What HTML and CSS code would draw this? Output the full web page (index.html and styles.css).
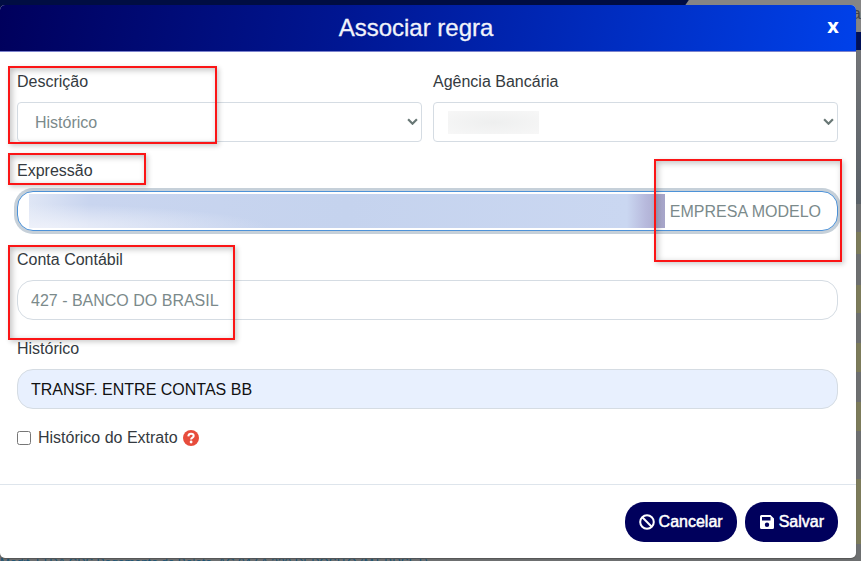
FILE: index.html
```html
<!DOCTYPE html>
<html lang="pt-BR">
<head>
<meta charset="utf-8">
<meta name="viewport" content="width=device-width, initial-scale=1">
<title>Associar regra</title>
<link rel="stylesheet" href="styles.css">
</head>
<body>
<div class="backdrop" aria-hidden="true">
  <div class="backdrop-banner"></div>
  <div class="backdrop-top"><span>a</span></div>
  <div class="backdrop-nav"></div>
  <div class="backdrop-head"></div>
  <div class="backdrop-rows"></div>
</div>
<form class="modal" role="dialog" aria-labelledby="title">
  <header class="modal-header">
    <h1 id="title">Associar regra</h1>
    <button class="close" type="button" aria-label="Fechar">x</button>
  </header>
  <div class="modal-body">
    <div class="row">
      <div class="field">
        <label for="descricao">Descrição</label>
        <div class="select-wrap">
          <select id="descricao" class="control"><option>Histórico</option></select>
          <svg class="chevron" viewBox="0 0 10 6"><path d="M1 1l4 4 4-4"/></svg>
        </div>
        <span class="mark mark-descricao"></span>
      </div>
      <div class="field">
        <label for="agencia">Agência Bancária</label>
        <div class="select-wrap">
          <select id="agencia" class="control"><option></option></select>
          <span class="redacted-agency"></span>
          <svg class="chevron" viewBox="0 0 10 6"><path d="M1 1l4 4 4-4"/></svg>
        </div>
      </div>
    </div>
    <div class="field">
      <label for="expressao">Expressão</label>
      <div class="input-wrap">
        <input id="expressao" class="control pill focused" type="text" value="EMPRESA MODELO">
        <span class="redacted-text"></span>
      </div>
      <span class="mark mark-label"></span>
      <span class="mark mark-value"></span>
    </div>
    <div class="field">
      <label for="conta">Conta Contábil</label>
      <input id="conta" class="control pill" type="text" value="427 - BANCO DO BRASIL">
      <span class="mark mark-conta"></span>
    </div>
    <div class="field">
      <label for="historico">Histórico</label>
      <input id="historico" class="control pill filled" type="text" value="TRANSF. ENTRE CONTAS BB">
    </div>
    <div class="check">
      <input id="extrato" type="checkbox">
      <label for="extrato">Histórico do Extrato</label>
      <svg class="help" viewBox="0 0 16 16"><circle cx="8" cy="8" r="8"/><path d="M5.300 6.300C5.500 4.600 6.500 3.800 8 3.800c1.600 0 2.700.9 2.700 2.200C10.700 7.700 8.100 7.500 8.100 9.500"/><circle class="dot" cx="8.100" cy="12" r="1.400"/></svg>
    </div>
  </div>
  <footer class="modal-footer">
    <button class="btn" type="button">
      <svg viewBox="0 0 16 16"><g fill="none" stroke="currentColor" stroke-width="2"><circle cx="8" cy="8" r="6.800"/><path d="M3.300 3.300l9.400 9.400"/></g></svg>
      <span>Cancelar</span>
    </button>
    <button class="btn" type="submit">
      <svg viewBox="0 0 16 16"><path fill="currentColor" fill-rule="evenodd" d="M2.500 1H11.500L15 4.500V13.500Q15 15 13.500 15H2.500Q1 15 1 13.500V2.500Q1 1 2.500 1ZM3 3V6.500H11.500V3ZM8 8.500A2.200 2.200 0 1 0 8 12.900A2.200 2.200 0 1 0 8 8.500Z"/></svg>
      <span>Salvar</span>
    </button>
  </footer>
</form>
<div class="page-line" aria-hidden="true">Modif. LTDA CPS Pagamento de Boleto, AC 047 A 330 DEPÓSITO (MT BRSET)</div>
</body>
</html>
```

FILE: styles.css
```css
* { box-sizing: border-box; }
html { height: 100%; }
body {
  margin: 0;
  height: 100%;
  padding: 5px 5px 0 0;
  overflow: hidden;
  position: relative;
  background: #777977;
  color: #343a40;
  font: 16px/24px "Liberation Sans", Arial, sans-serif;
}
button, input, select { font: inherit; }

.backdrop {
  position: absolute;
  inset: 0;
  display: flex;
  flex-direction: column;
  background: #777;
  z-index: -1;
}
.backdrop-banner {
  position: absolute;
  inset: 0 20% auto 0;
  height: 10px;
  background: #000d42;
  clip-path: polygon(0 0, 100% 0, 99% 100%, 0 100%);
}
.backdrop-top {
  height: 32px;
  background: #858585;
  color: #444;
  line-height: 28px;
  text-align: right;
  overflow: hidden;
}
.backdrop-nav { height: 18px; background: #001058; }
.backdrop-head { height: 154px; background: linear-gradient(#737578, #5a6168); }
.backdrop-rows {
  flex: 1;
  background: linear-gradient(#6f7071 28px, #7c7b5a 28px 50px, #6d6f70 50px 81px, #7c7b5a 81px 109px, #6d6f70 109px 139px, #7c7b5a 139px 168px, #6d6f70 168px 198px, #7c7b5a 198px 227px, #6d6f70 227px 275px, #7c7b5a 275px 340px, #6d6f70 340px);
}

.modal {
  position: relative;
  background: #fff;
  border-radius: 5px;
  box-shadow: 0 1px 1px #555;
}
.modal-header {
  position: relative;
  padding: 7px 17px 8px;
  background: linear-gradient(100deg, #00005c, #001692 40%, #0041ea);
  border-bottom: 1px solid #7c82cc;
  border-radius: 5px 5px 0 0;
  text-align: center;
  color: #f1f3fa;
}
.modal-header h1 { margin: 0; padding-right: 24px; font-size: 24px; line-height: 31px; font-weight: 400; -webkit-text-stroke: 0.3px #f1f3fa; }
.close {
  position: absolute;
  right: 12px;
  top: 7px;
  width: 22px;
  padding: 0;
  border: 0;
  background: none;
  color: #fff;
  font: bold 20px/28px "Open Sans", sans-serif;
}
.modal-body { padding: 18px 18px 34px 17px; }
.row { display: grid; grid-template-columns: 1fr 1fr; gap: 11px; }
.field { position: relative; margin-bottom: 17px; }
.field label { display: block; margin-bottom: 8px; }
.select-wrap, .input-wrap { position: relative; }
.control {
  display: block;
  width: 100%;
  height: 40px;
  padding: 1px 14px 0;
  border: 1px solid #d5dce3;
  border-radius: 4px;
  background: #fff;
  color: #7b8a8b;
  outline: 0;
}
select.control { appearance: none; padding-left: 17px; }
.pill { border-radius: 16px; padding: 1px 13px 0; }
.focused {
  border: 1px solid #4d92d8;
  box-shadow: 0 0 0 3px #c6d0d9;
  padding-right: 16px;
  text-align: right;
}
.filled { background: #e8f0fe; color: #111; }
.chevron {
  position: absolute;
  right: 4px;
  top: 16px;
  width: 11px;
  height: 7px;
  fill: none;
  stroke: #687775;
  stroke-width: 2;
}
.redacted-agency {
  position: absolute;
  left: 15px;
  top: 9px;
  width: 91px;
  height: 23px;
  background: radial-gradient(#eeefef, #f7f7f7);
}
.redacted-text {
  position: absolute;
  left: 12px;
  right: 173px;
  top: 3px;
  height: 34px;
  background:
    radial-gradient(ellipse 240px 24px at 0 100%, #eef1fa, rgba(238,241,250,0)),
    linear-gradient(90deg, #dfe6f5, #c9d5ef 60px, #c5d3ee 50%, #cad7f1 94%, #b7b9dc 97%, #a7a5c9);
}
.mark {
  position: absolute;
  border: 2px solid #fb1516;
  box-shadow: 2px 2px 5px rgba(0,0,0,.2), inset 2px 2px 6px rgba(0,0,0,.25);
  pointer-events: none;
  z-index: 1;
}
.mark-descricao { left: -9px; top: -4px; width: 209px; height: 78px; }
.mark-label { left: -9px; top: -6px; width: 138px; height: 32px; }
.mark-value { right: -4px; top: 0; width: 188px; height: 103px; }
.mark-conta { left: -9px; top: -3px; width: 227px; height: 95px; }

.check { display: flex; align-items: center; }
.check input { width: 14px; height: 14px; margin: 0 7px 0 0; }
.help { width: 16px; height: 16px; margin-left: 5px; fill: #e74c3c; }
.help path { fill: none; stroke: #fff; stroke-width: 2; }
.help .dot { fill: #fff; }

.modal-footer {
  display: flex;
  justify-content: flex-end;
  gap: 8px;
  padding: 17px 18px 16px;
  border-top: 1px solid #dee5ec;
}
.btn {
  display: flex;
  align-items: center;
  gap: 4px;
  height: 40px;
  padding: 0 14px;
  border: 0;
  border-radius: 19px;
  background: #00005c;
  color: #fff;
  -webkit-text-stroke: 0.5px #fff;
}
.btn svg { width: 16px; height: 16px; }
.page-line {
  position: relative;
  z-index: -1;
  margin-top: -1px;
  color: #175577;
  font-size: 12px;
  line-height: 12px;
  white-space: nowrap;
}
```
